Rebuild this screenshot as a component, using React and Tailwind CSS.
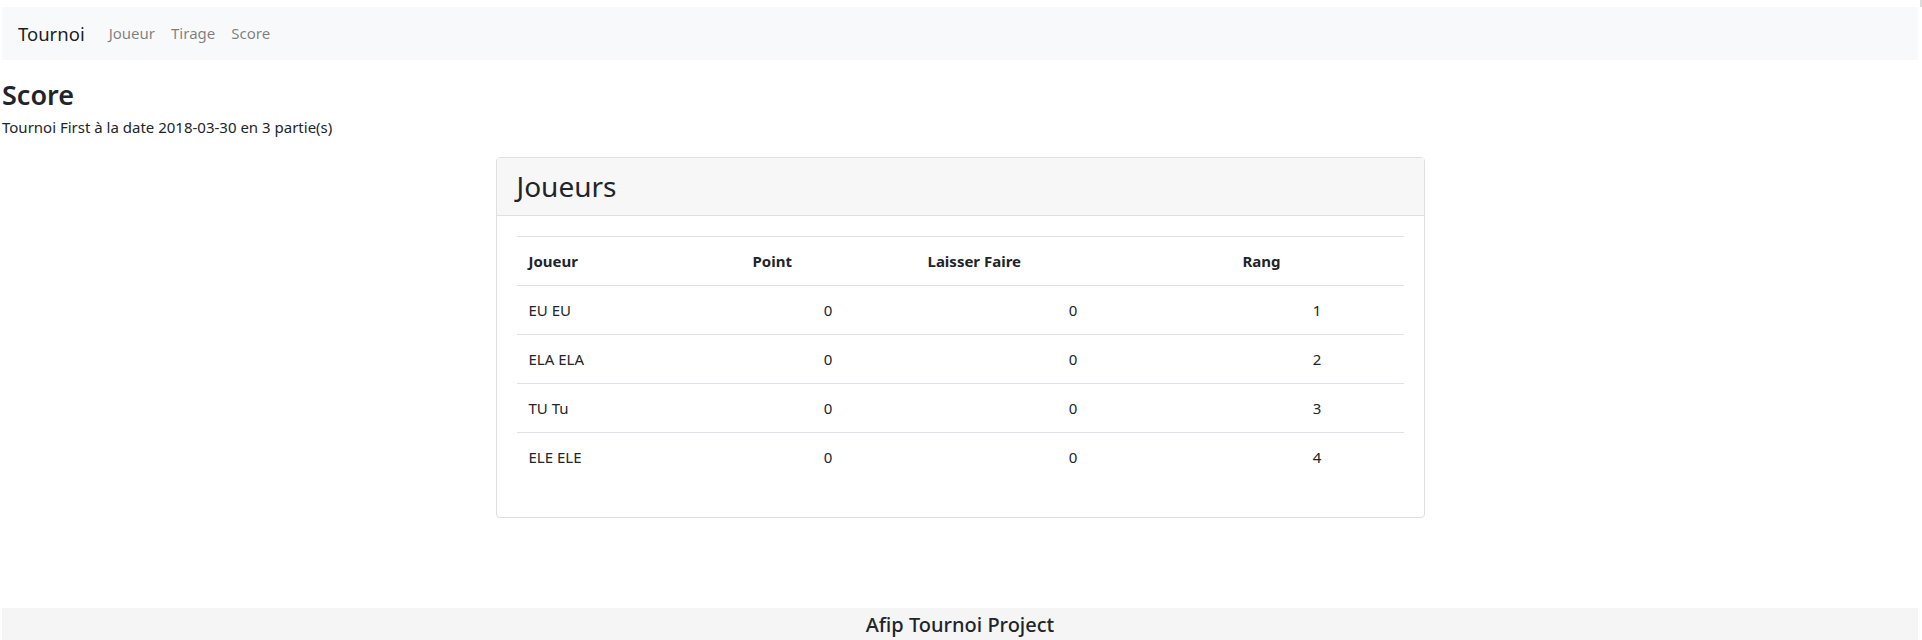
import React from "react";

const players = [
  { nom: "EU EU", point: 0, laisser: 0, rang: 1 },
  { nom: "ELA ELA", point: 0, laisser: 0, rang: 2 },
  { nom: "TU Tu", point: 0, laisser: 0, rang: 3 },
  { nom: "ELE ELE", point: 0, laisser: 0, rang: 4 },
];

const App = () => {
  return (
    <div
      className="min-h-screen bg-white text-[#212529] text-[16px] leading-[1.5]"
      style={{ fontFamily: '"Noto Sans", "Open Sans", sans-serif' }}
    >
      <div className="flex justify-end h-[7px]">
        <div className="w-[2px] h-[7px] bg-[#dcdcdc]"></div>
      </div>
      <div className="pl-[2px] pr-[4px]">
        <nav className="h-[53px] bg-[#f8f9fa] flex items-center px-[16px]">
          <a className="text-[18.5px] text-[rgba(0,0,0,0.9)] mr-[16px]" href="#">
            Tournoi
          </a>
          <div className="flex">
            <a className="px-[8px] text-[15px] text-[rgba(0,0,0,0.5)]" href="#">Joueur</a>
            <a className="px-[8px] text-[15px] text-[rgba(0,0,0,0.5)]" href="#">Tirage</a>
            <a className="px-[8px] text-[15px] text-[rgba(0,0,0,0.5)]" href="#">Score</a>
          </div>
        </nav>

        <h3 className="text-[27px] font-semibold leading-[1.2] mt-[19px] mb-[5px]">Score</h3>
        <p className="text-[15px]">Tournoi First à la date 2018-03-30 en 3 partie(s)</p>

        <div className="w-[929px] mx-auto mt-[18px] border border-[#dfdfdf] rounded-[4px] bg-white">
          <div className="h-[58px] bg-[#f7f7f7] border-b border-[#dfdfdf] px-[20px] flex items-center">
            <h2 className="text-[28px] font-normal leading-[1.2]">Joueurs</h2>
          </div>
          <div className="p-[20px]">
            <table className="w-full text-[15px] border-collapse mb-[16px]">
              <thead>
                <tr className="border-t border-b border-[#dee2e6]">
                  <th className="w-[224px] text-left font-bold px-[12px] h-[49px]">Joueur</th>
                  <th className="w-[175px] text-left font-bold px-[12px]">Point</th>
                  <th className="w-[315px] text-left font-bold px-[12px]">Laisser Faire</th>
                  <th className="text-left font-bold px-[12px]">Rang</th>
                </tr>
              </thead>
              <tbody>
                {players.map((p, i) => (
                  <tr key={i} className={i < players.length - 1 ? "border-b border-[#dee2e6]" : ""}>
                    <td className="px-[12px] h-[49px]">{p.nom}</td>
                    <td className="px-[12px] text-center">{p.point}</td>
                    <td className="px-[12px] text-center">{p.laisser}</td>
                    <td className="px-[12px] text-center">{p.rang}</td>
                  </tr>
                ))}
              </tbody>
            </table>
          </div>
        </div>

        <footer className="mt-[90px] h-[34px] bg-[#f5f5f5] flex items-center justify-center">
          <h5 className="text-[20px] font-medium leading-[1.2]">Afip Tournoi Project</h5>
        </footer>
      </div>
    </div>
  );
};

export default App;
